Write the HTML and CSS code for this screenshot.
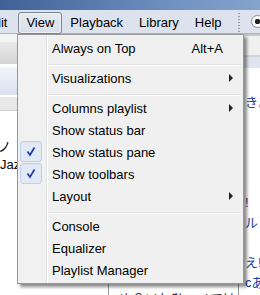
FILE: index.html
```html
<!DOCTYPE HTML>
<html>
    <head>
        <meta name="viewport" content="width=device-width, initial-scale=1.0">
        <title>View menu</title>
        <link rel="stylesheet" href="styles.css">
    </head>
    <body>
        <div class="window">
            <div class="titlebar"></div>
            <div class="menubar">
                <span class="mi first">Edit</span>
                <span class="mi active">View</span>
                <span class="mi">Playback</span>
                <span class="mi">Library</span>
                <span class="mi">Help</span>
                <span class="grip"></span>
                <span class="radio"></span>
            </div>
            <div class="panes">
                <div class="left">
                    <div class="b1"></div>
                    <div class="b2"></div>
                    <div class="b3"></div>
                    <div class="b4"></div>
                    <div class="b5"></div>
                    <div class="b6"></div>
                    <div class="rows">
                        <div class="row"><span class="c1"></span><span class="c2"></span></div>
                        <div class="row"><span class="c1 cut">ノ</span><span class="c2"></span></div>
                        <div class="row"><span class="c1">Jazz</span><span class="c2"></span></div>
                        <div class="row"><span class="c1"></span><span class="c2"></span></div>
                        <div class="row"><span class="c1"></span><span class="c2"></span></div>
                        <div class="row"><span class="c1"></span><span class="c2"></span></div>
                        <div class="row"><span class="c1"></span><span class="c2"></span></div>
                        <div class="row"><span class="c1"></span><span class="c2"></span></div>
                        <div class="row"><span class="c1"></span><span class="c2"></span></div>
                        <div class="row last"><span class="c1"></span><span class="c2">ゆ？ソれひヘノてはcあ</span></div>
                    </div>
                </div>
                <div class="right">
                    <div class="r1"></div>
                    <div class="r2"></div>
                    <div class="r3"></div>
                    <div class="r4"></div>
                    <div class="lines">
                        <div class="line">きあ</div>
                        <div class="line"></div>
                        <div class="line"></div>
                        <div class="line"></div>
                        <div class="line"></div>
                        <div class="line">!</div>
                        <div class="line">ル</div>
                        <div class="line"></div>
                        <div class="line">え!</div>
                        <div class="line">cあ</div>
                    </div>
                </div>
            </div>

            <div class="menu">
                <div class="item">Always on Top<span class="key">Alt+A</span></div>
                <div class="sep"></div>
                <div class="item">Visualizations<span class="arrow"></span></div>
                <div class="sep"></div>
                <div class="item">Columns playlist<span class="arrow"></span></div>
                <div class="item">Show status bar</div>
                <div class="item">
                    <span class="check"><svg width="20" height="19" viewBox="0 0 20 19"><path d="M6.5 9.5 L9 13 L13.5 5.5" fill="none" stroke="#1b3aa6" stroke-width="1.7"/></svg></span>
                    Show status pane
                </div>
                <div class="item">
                    <span class="check"><svg width="20" height="19" viewBox="0 0 20 19"><path d="M6.5 9.5 L9 13 L13.5 5.5" fill="none" stroke="#1b3aa6" stroke-width="1.7"/></svg></span>
                    Show toolbars
                </div>
                <div class="item">Layout<span class="arrow"></span></div>
                <div class="sep"></div>
                <div class="item">Console</div>
                <div class="item">Equalizer</div>
                <div class="item">Playlist Manager</div>
            </div>
        </div>
    </body>
</html>
```
FILE: styles.css
```css
body{
    margin: 0;
    font-family: "Liberation Sans", Arial, "Noto Sans CJK JP", sans-serif;
    font-size: 13px;
    background: #fff;
    color: #000;
}
.window{
    position: relative;
    width: 260px;
    height: 295px;
    overflow: hidden;
}
.titlebar{
    height: 10px;
    background: linear-gradient(to right, #3f6197, #7393c2 70%, #86a3ce);
}
.menubar{
    height: 23px;
    display: flex;
    align-items: flex-start;
    background: #dce3ee;
    border-bottom: 1px solid #a9b2c1;
}
.mi{
    margin-top: 2px;
    padding: 0 7px;
    height: 20px;
    line-height: 20px;
    border: 1px solid transparent;
    border-radius: 3px;
    white-space: nowrap;
}
.mi.first{
    margin-left: -23px;
    padding-right: 10px;
}
.mi.active{
    border-color: #7e8590;
    background: linear-gradient(#e6eaf1, #d9dfe9);
    box-shadow: inset 0 0 0 1px #eef1f6;
}
.grip{
    margin-left: auto;
    margin-top: 3px;
    width: 2px;
    height: 19px;
    background: repeating-linear-gradient(#8d96a5 0, #8d96a5 1px, transparent 1px, transparent 3px);
}
.radio{
    margin: 5px -4px 0 11px;
    width: 11px;
    height: 11px;
    border: 1px solid #8b8b8b;
    border-radius: 50%;
    background: radial-gradient(circle, #222 0, #222 2.5px, #fdfdfd 3px);
}
.panes{
    display: flex;
    height: 261px;
}
.left{
    width: 238px;
    flex-shrink: 0;
}
.b1{ height: 8px; background: #f3f3f3; }
.b2{ height: 22px; background: linear-gradient(#e8e8e8, #d5d5d5); }
.b3{ height: 3px; background: #fff; }
.b4{ height: 28px; background: linear-gradient(#f2f5fa, #d9e1ef); }
.b5{ height: 2px; background: #fff; }
.b6{ height: 13px; background: #e8e8e8; border-bottom: 1px solid #cfcfcf; }
.rows{
    padding-top: 9px;
}
.row{
    display: flex;
    height: 18px;
    line-height: 18px;
    white-space: nowrap;
}
.c1{
    width: 108px;
    overflow: hidden;
}
.c1.cut{
    text-indent: -2px;
}
.c2{
    flex: 1;
    padding-left: 10px;
    overflow: hidden;
    color: #333;
}
.row.last .c2{
    border-left: 1px solid #9a9a9a;
    line-height: 34px;
}
.right{
    flex: 1;
    border-left: 1px solid #9a9a9a;
    overflow: hidden;
}
.r1{ height: 2px; background: #c9c9c9; }
.r2{ height: 19px; background: #f0f0f0; }
.r3{ height: 2px; background: #cdd3dc; }
.r4{ height: 11px; background: #dfe5ef; }
.lines{
    padding-top: 25px;
}
.line{
    height: 20px;
    line-height: 20px;
    padding-left: 6px;
    color: #1c3c9c;
    white-space: nowrap;
}
.menu{
    position: absolute;
    left: 17px;
    top: 34px;
    width: 225px;
    padding: 2px 0;
    border: 1px solid #979797;
    background: linear-gradient(to right, #f1f1f1 28px, #e2e3e3 28px, #e2e3e3 29px, #fff 29px, #fff 30px, #f0f0f0 30px);
    box-shadow: 3px 3px 3px rgba(0,0,0,0.45);
}
.item{
    position: relative;
    display: flex;
    align-items: center;
    height: 22px;
    padding: 0 10px 0 34px;
    white-space: nowrap;
}
.key{
    margin-left: auto;
    margin-right: 10px;
}
.arrow{
    margin-left: auto;
    width: 0;
    height: 0;
    border-left: 4px solid #222;
    border-top: 4px solid transparent;
    border-bottom: 4px solid transparent;
}
.check{
    position: absolute;
    left: 2px;
    top: 0;
    width: 20px;
    height: 19px;
    border: 1px solid #c0cee6;
    border-radius: 3px;
    background: #e2e9f6;
}
.check svg{
    display: block;
}
.sep{
    height: 8px;
    box-sizing: border-box;
    padding-top: 5px;
    margin: 0 2px 0 30px;
}
.sep::after{
    content: "";
    display: block;
    border-top: 1px solid #e0e0e0;
    border-bottom: 1px solid #fff;
}
```
